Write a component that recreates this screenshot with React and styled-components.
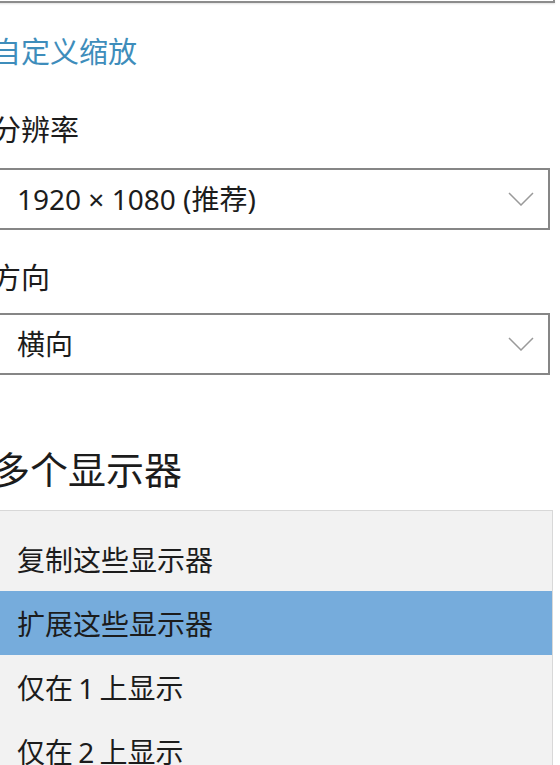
import React from "react";
import styled, { createGlobalStyle } from "styled-components";

const Global = createGlobalStyle`
  html, body {
    margin: 0;
    padding: 0;
    background: #ffffff;
    overflow: hidden;
  }
  body {
    font-family: "Noto Sans", "Noto Sans CJK SC", sans-serif;
    color: #1c1c1c;
  }
`;

const Page = styled.div`
  display: flex;
  flex-direction: column;
  align-items: flex-start;
  margin-left: -8px;
  width: 568px;
`;

const CutBox = styled.div`
  width: 561px;
  height: 1px;
  border-bottom: 2px solid #8c8c8c;
  border-right: 2px solid #8c8c8c;
  box-shadow: 0 1px 2px rgba(0, 0, 0, 0.12);
`;

const Link = styled.a`
  margin-top: 31px;
  font-size: 29px;
  line-height: 36px;
  color: #3e8dbb;
  text-decoration: none;
  cursor: pointer;
`;

const Label = styled.div`
  margin-top: ${(p) => p.$top}px;
  font-size: 29px;
  line-height: 36px;
  color: #1c1c1c;
`;

const Select = styled.div`
  margin-top: ${(p) => p.$top}px;
  box-sizing: border-box;
  width: 558px;
  height: 62px;
  border: 2px solid #868686;
  display: flex;
  align-items: center;
  justify-content: space-between;
  padding: 0 14px 0 23px;
  background: #ffffff;
`;

const SelectText = styled.span`
  font-size: 28px;
  line-height: 36px;
  color: #1c1c1c;
`;

const Chevron = () => (
  <svg width="26" height="14" viewBox="0 0 26 14" fill="none">
    <polyline points="1,1 13,13 25,1" stroke="#9a9a9a" strokeWidth="1.5" />
  </svg>
);

const Title = styled.h2`
  margin: 70px 0 0;
  font-size: 38px;
  line-height: 48px;
  font-weight: 400;
  color: #1c1c1c;
`;

const List = styled.div`
  margin-top: 17px;
  box-sizing: border-box;
  width: 561px;
  background: #f2f2f2;
  border: 1px solid #d8d8d8;
  padding-top: 16px;
  display: flex;
  flex-direction: column;
`;

const Item = styled.div`
  height: 64px;
  display: flex;
  align-items: center;
  padding-left: 24px;
  font-size: 28px;
  word-spacing: -2px;
  color: #1c1c1c;
  background: ${(p) => (p.$selected ? "#76acdc" : "transparent")};
`;

const items = ["复制这些显示器", "扩展这些显示器", "仅在 1 上显示", "仅在 2 上显示"];

export default function App() {
  return (
    <>
      <Global />
      <Page>
        <CutBox />
        <Link>自定义缩放</Link>
        <Label $top={42}>分辨率</Label>
        <Select $top={20}>
          <SelectText>1920 × 1080 (推荐)</SelectText>
          <Chevron />
        </Select>
        <Label $top={30}>方向</Label>
        <Select $top={17}>
          <SelectText>横向</SelectText>
          <Chevron />
        </Select>
        <Title>多个显示器</Title>
        <List>
          {items.map((t, i) => (
            <Item key={t} $selected={i === 1}>
              {t}
            </Item>
          ))}
        </List>
      </Page>
    </>
  );
}
